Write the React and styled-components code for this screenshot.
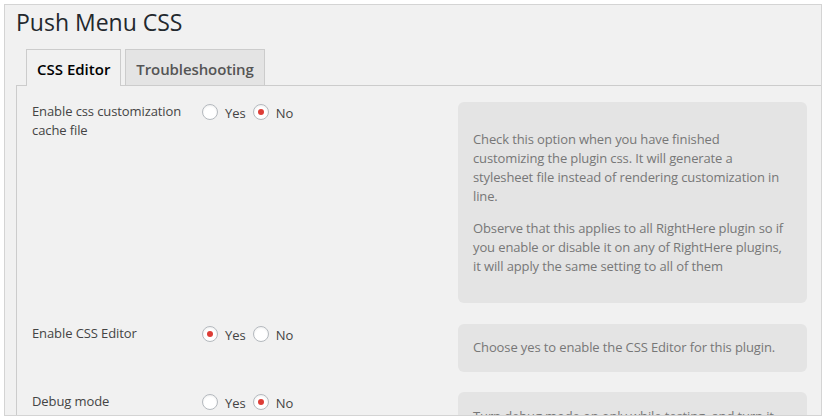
import React from "react"
import styled, { createGlobalStyle } from "styled-components"

const GlobalStyle = createGlobalStyle`
  html, body {
    margin: 0;
    padding: 0;
    background: #fff;
  }
  body {
    font-family: "Open Sans", "Liberation Sans", sans-serif;
  }
`

const settings = [
  {
    label: "Enable css customization cache file",
    value: "no",
    help: [
      "Check this option when you have finished customizing the plugin css. It will generate a stylesheet file instead of rendering customization in line.",
      "Observe that this applies to all RightHere plugin so if you enable or disable it on any of RightHere plugins, it will apply the same setting to all of them",
    ],
  },
  {
    label: "Enable CSS Editor",
    value: "yes",
    help: "Choose yes to enable the CSS Editor for this plugin.",
  },
  {
    label: "Debug mode",
    value: "no",
    help: "Turn debug mode on only while testing, and turn it off when you are done.",
  },
]

function Radio({ checked, children }) {
  return (
    <Choice>
      <Circle $checked={checked} />
      {children}
    </Choice>
  )
}

export default function App() {
  return (
    <>
      <GlobalStyle />
      <Frame>
        <Title>Push Menu CSS</Title>
        <TabBar>
          <Tab $active>CSS Editor</Tab>
          <Tab>Troubleshooting</Tab>
        </TabBar>
        <Panel>
          {settings.map((s) => (
            <Row key={s.label}>
              <Label>{s.label}</Label>
              <Choices>
                <Radio checked={s.value === "yes"}>Yes</Radio>
                <Radio checked={s.value === "no"}>No</Radio>
              </Choices>
              <Help>
                {Array.isArray(s.help)
                  ? s.help.map((p, i) => <p key={i}>{p}</p>)
                  : s.help}
              </Help>
            </Row>
          ))}
        </Panel>
      </Frame>
    </>
  )
}

const Frame = styled.div`
  margin: 4px;
  height: 410px;
  border: 1px solid #d4d4d4;
  background: #f1f1f1;
  padding: 0 0 0 11px;
  overflow: hidden;
  display: flex;
  flex-direction: column;
`

const Title = styled.h2`
  margin: 3px 0 12px 0;
  font-size: 23px;
  line-height: 29px;
  font-weight: 400;
  color: #23282d;
`

const TabBar = styled.div`
  display: flex;
  gap: 4px;
  padding-left: 10px;
  border-bottom: 1px solid #ccc;
`

const Tab = styled.div`
  padding: 7px 10px 4px;
  line-height: 24px;
  font-size: 15px;
  font-weight: 600;
  letter-spacing: ${(p) => (p.$active ? "0" : "-0.1px")};
  border: 1px solid #ccc;
  border-bottom: none;
  margin-bottom: ${(p) => (p.$active ? "-1px" : "0")};
  padding-bottom: ${(p) => (p.$active ? "5px" : "4px")};
  background: ${(p) => (p.$active ? "#f1f1f1" : "#e4e4e4")};
  color: ${(p) => (p.$active ? "#000" : "#555")};
`

const Panel = styled.div`
  flex: 1;
  border-left: 1px solid #ccc;
  padding: 16px 14px 0 15px;
  display: flex;
  flex-direction: column;
  gap: 20.5px;
`

const Row = styled.div`
  display: grid;
  grid-template-columns: 170px 256px 349px;
  align-items: start;
`

const Label = styled.div`
  font-size: 13px;
  line-height: 19px;
  color: #444;
  letter-spacing: -0.1px;
  padding-right: 10px;
`

const Choices = styled.div`
  display: flex;
  align-items: center;
  gap: 7px;
  font-size: 13px;
  line-height: 19px;
  color: #444;
  padding-top: 2px;
`

const Choice = styled.span`
  display: inline-flex;
  align-items: center;
  gap: 7px;
`

const Circle = styled.span`
  box-sizing: border-box;
  width: 16px;
  height: 16px;
  border-radius: 50%;
  border: 1px solid #b4b9be;
  background: #fff;
  box-shadow: inset 0 1px 2px rgba(0, 0, 0, 0.07);
  display: inline-flex;
  align-items: center;
  justify-content: center;
  margin-top: -3px;

  &::after {
    content: "";
    width: 6px;
    height: 6px;
    border-radius: 50%;
    background: #dd3d36;
    display: ${(p) => (p.$checked ? "block" : "none")};
  }
`

const Help = styled.div`
  background: #e4e4e4;
  border-radius: 6px;
  padding: 14.5px 15px 14.5px 15px;
  font-size: 13px;
  line-height: 19px;
  color: #777;
  letter-spacing: -0.12px;

  p {
    margin: 13px 0;
  }
`
